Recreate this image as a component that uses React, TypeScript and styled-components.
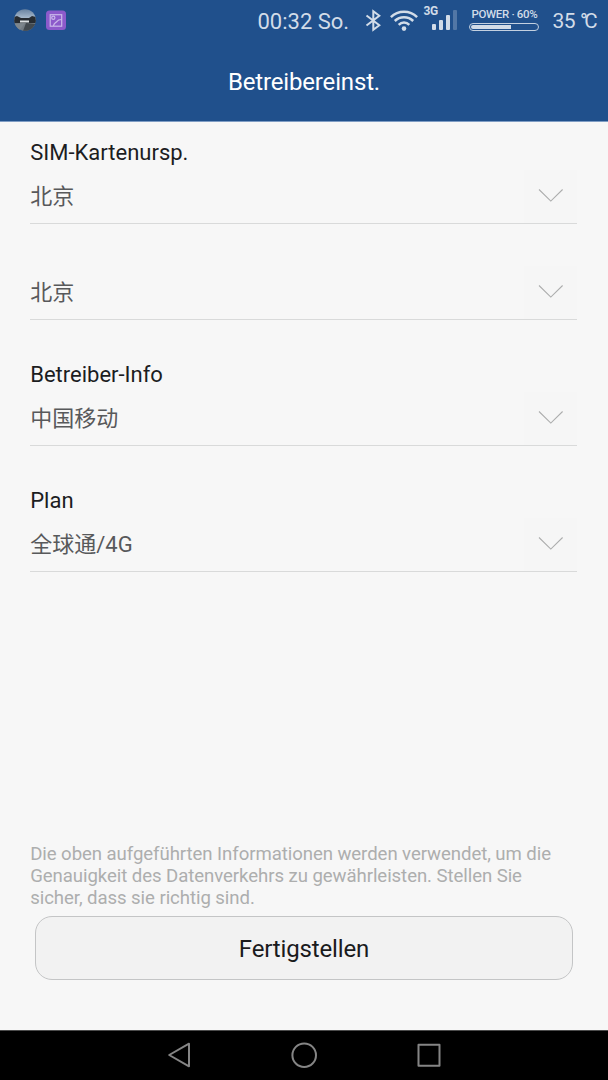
import React from 'react';
import styled, { createGlobalStyle } from 'styled-components';

const GlobalStyle = createGlobalStyle`
  * { box-sizing: border-box; }
  body {
    margin: 0;
    background: #f7f7f7;
    font-family: Roboto, "Noto Sans CJK SC", sans-serif;
  }
`;

const Screen = styled.div`
  display: flex;
  flex-direction: column;
  width: 608px;
  height: 1080px;
  overflow: hidden;
  background: #f7f7f7;
`;

const Header = styled.header`
  flex: none;
  height: 122px;
  background: #20508c;
  border-bottom: 1px solid #7f9dc4;
`;

const StatusBar = styled.div`
  display: flex;
  height: 41px;
  padding: 0 10.5px 0 14px;
  color: #d2dce8;
`;

const Notifications = styled.div`
  display: flex;
  gap: 10px;
  padding-top: 9px;
  flex: 1;
`;

const Clock = styled.span`
  padding-top: 9px;
  font-size: 22px;
  line-height: 26px;
  white-space: nowrap;
  width: 107px;
`;

const BluetoothSlot = styled.div`
  width: 25px;
  padding-top: 9px;
`;

const WifiSlot = styled.div`
  width: 34px;
  padding-top: 9px;
`;

const Signal = styled.div`
  width: 45px;
  padding-top: 4px;
`;

const SignalLabel = styled.div`
  height: 11px;
  font-size: 12px;
  line-height: 14px;
  font-weight: 700;
  letter-spacing: -0.4px;
`;

const SignalBars = styled.div`
  display: flex;
  align-items: flex-end;
  gap: 3px;
  height: 20px;
  margin-top: -5px;
  padding-left: 8px;
`;

const Bar = styled.i<{ $h: number; $off?: boolean }>`
  width: 4px;
  height: ${(p) => p.$h}px;
  border-radius: 1px;
  background: ${(p) => (p.$off ? '#5277a6' : '#d2dce8')};
`;

const Power = styled.div`
  width: 84px;
  padding-top: 8px;
`;

const PowerLabel = styled.div`
  padding-left: 3px;
  font-size: 11.5px;
  line-height: 13px;
  font-weight: 500;
  letter-spacing: -0.35px;
  white-space: nowrap;
`;

const PowerTrack = styled.div`
  width: 70px;
  height: 8px;
  margin-top: 2px;
  padding: 1px;
  border: 1px solid #c3d0e0;
  border-radius: 4px;
`;

const PowerFill = styled.div`
  width: 40px;
  height: 4px;
  border-radius: 2px 0 0 2px;
  background: #d2dce8;
`;

const Temperature = styled.span`
  display: flex;
  padding-top: 8px;
  font-size: 21px;
  line-height: 26px;
  letter-spacing: -0.6px;
  white-space: nowrap;
  width: 45px;
`;

const Unit = styled.span`
  margin-left: 5px;
  font-size: 20.5px;
  letter-spacing: -3.2px;
`;

const Title = styled.h1`
  margin: 0;
  font-size: 24px;
  line-height: 82px;
  font-weight: 400;
  letter-spacing: -0.16px;
  text-align: center;
  color: #fff;
`;

const Form = styled.main`
  flex: 1;
  display: flex;
  flex-direction: column;
  padding: 14px 30px 0;
`;

const Field = styled.section<{ $gap: number }>`
  margin-top: ${(p) => p.$gap}px;
`;

const Label = styled.div`
  height: 34px;
  padding-left: 0.2px;
  font-size: 22px;
  line-height: 34px;
  color: #1c1d1f;
`;

const Select = styled.div`
  display: flex;
  justify-content: space-between;
  width: 547px;
  height: 54px;
  border-bottom: 1px solid #d9dada;
  font-size: 22px;
  line-height: 54px;
  color: #58595b;
`;

const Value = styled.span`
  padding-left: 0.2px;
`;

const Arrow = styled.span`
  display: flex;
  width: 53px;
  height: 53px;
  background: #f6f6f6;
  padding: 18px 0 0 14px;
`;

const Footer = styled.footer`
  flex: none;
  height: 187px;
  padding: 0 30px;
`;

const Hint = styled.p`
  margin: 0;
  padding-left: 0.2px;
  font-size: 18.6px;
  line-height: 22px;
  letter-spacing: -0.07px;
  color: #adaeae;
  white-space: nowrap;
`;

const Button = styled.button`
  display: block;
  width: 538px;
  height: 64px;
  margin: 7px 0 0 5px;
  padding: 2px 0 0;
  border: 1px solid #c4c5c6;
  border-radius: 17px;
  background: #f2f2f2;
  font: 24px Roboto, sans-serif;
  letter-spacing: -0.14px;
  color: #1a1b1d;
`;

const NavBar = styled.nav`
  flex: none;
  display: flex;
  justify-content: center;
  align-items: flex-start;
  gap: 97px;
  height: 50px;
  padding-top: 10px;
  border-top: 1px solid #4c4c4c;
  background: #000;
`;

const Chevron = () => (
  <svg width="26" height="16" viewBox="0 0 26 16" fill="none" stroke="#acadad" strokeWidth="1.1">
    <path d="M1 1.5 12.8 13.1 24.6 1.5" />
  </svg>
);

const PhotoIcon = () => (
  <svg width="22" height="22" viewBox="0 0 22 22">
    <defs>
      <clipPath id="avatar"><circle cx="11" cy="11" r="10.8" /></clipPath>
      <linearGradient id="sky" x2="0" y2="1">
        <stop stopColor="#67819f" />
        <stop offset="1" stopColor="#b5c6d7" />
      </linearGradient>
    </defs>
    <g clipPath="url(#avatar)">
      <path fill="url(#sky)" d="M0 0h22v11H0z" />
      <path fill="#727b83" d="M0 11h22v11H0z" />
      <path fill="#272c32" d="M0 8l3-1 4 2h8l3-2 4 1v6H0z" />
      <path fill="#dce1e4" d="M6 11.500h9v2H6z" />
      <path fill="#42494f" d="M12 14l10 1v7H9z" />
      <path fill="#7d868d" d="M0 15l11-1-6 8H0z" />
    </g>
  </svg>
);

const GalleryIcon = () => (
  <svg width="20" height="22" viewBox="0 0 20 22" fill="none" stroke="#c9b8ea" strokeWidth="1.2">
    <rect x="0" y="1.5" width="20" height="19.5" rx="3.5" fill="#8c5acb" stroke="none" />
    <rect x="4.2" y="5.7" width="11.5" height="11.5" />
    <circle cx="7.3" cy="8.8" r="1.6" />
    <path d="M7.500 17c.2-3.200 2.500-3.200 3.500-4.700s2.500-1.700 4.500-1.800" />
  </svg>
);

const BluetoothIcon = () => (
  <svg width="17" height="23" viewBox="0 0 17 23" fill="none" stroke="#d2dce8" strokeWidth="2">
    <path d="M1.500 6.500 14.300 16.300 8.300 20.700V2.300l6 4.500L1.500 16.500" />
  </svg>
);

const WifiIcon = () => (
  <svg width="28" height="23" viewBox="0 0 28 23" fill="none" stroke="#d2dce8" strokeWidth="2.500">
    <path d="M.9 8.200a18.500 18.500 0 0 1 26.200 0M4.800 12a13 13 0 0 1 18.400 0M8.700 15.800a7.500 7.500 0 0 1 10.600 0" />
    <circle cx="14" cy="19.600" r="2.300" fill="#d2dce8" stroke="none" />
  </svg>
);

const BackIcon = () => (
  <svg width="28" height="28" viewBox="0 0 28 28" fill="none" stroke="#858585" strokeWidth="2" strokeLinejoin="round">
    <path d="M24 2.700v22.600L4.200 14z" />
  </svg>
);

const HomeIcon = () => (
  <svg width="28" height="28" viewBox="0 0 28 28" fill="none" stroke="#858585" strokeWidth="2">
    <circle cx="14.200" cy="14.200" r="11.800" />
  </svg>
);

const RecentIcon = () => (
  <svg width="28" height="28" viewBox="0 0 28 28" fill="none" stroke="#858585" strokeWidth="2" strokeLinejoin="round">
    <rect x="3.500" y="3.700" width="21" height="21" />
  </svg>
);

const fields = [
  { label: 'SIM-Kartenursp.', value: '北京', gap: 0 },
  { label: '', value: '北京', gap: 42 },
  { label: 'Betreiber-Info', value: '中国移动', gap: 38 },
  { label: 'Plan', value: '全球通/4G', gap: 38 },
];

export default function App() {
  return (
    <Screen>
      <GlobalStyle />
      <Header>
        <StatusBar>
          <Notifications>
            <PhotoIcon />
            <GalleryIcon />
          </Notifications>
          <Clock>00:32 So.</Clock>
          <BluetoothSlot><BluetoothIcon /></BluetoothSlot>
          <WifiSlot><WifiIcon /></WifiSlot>
          <Signal>
            <SignalLabel>3G</SignalLabel>
            <SignalBars>
              <Bar $h={6} />
              <Bar $h={10} />
              <Bar $h={15} />
              <Bar $h={20} $off />
            </SignalBars>
          </Signal>
          <Power>
            <PowerLabel>POWER · 60%</PowerLabel>
            <PowerTrack><PowerFill /></PowerTrack>
          </Power>
          <Temperature>35<Unit>°C</Unit></Temperature>
        </StatusBar>
        <Title>Betreibereinst.</Title>
      </Header>
      <Form>
        {fields.map((f, i) => (
          <Field key={i} $gap={f.gap}>
            {f.label && <Label>{f.label}</Label>}
            <Select>
              <Value>{f.value}</Value>
              <Arrow><Chevron /></Arrow>
            </Select>
          </Field>
        ))}
      </Form>
      <Footer>
        <Hint>
          Die oben aufgeführten Informationen werden verwendet, um die<br />
          Genauigkeit des Datenverkehrs zu gewährleisten. Stellen Sie<br />
          sicher, dass sie richtig sind.
        </Hint>
        <Button>Fertigstellen</Button>
      </Footer>
      <NavBar>
        <BackIcon />
        <HomeIcon />
        <RecentIcon />
      </NavBar>
    </Screen>
  );
}
